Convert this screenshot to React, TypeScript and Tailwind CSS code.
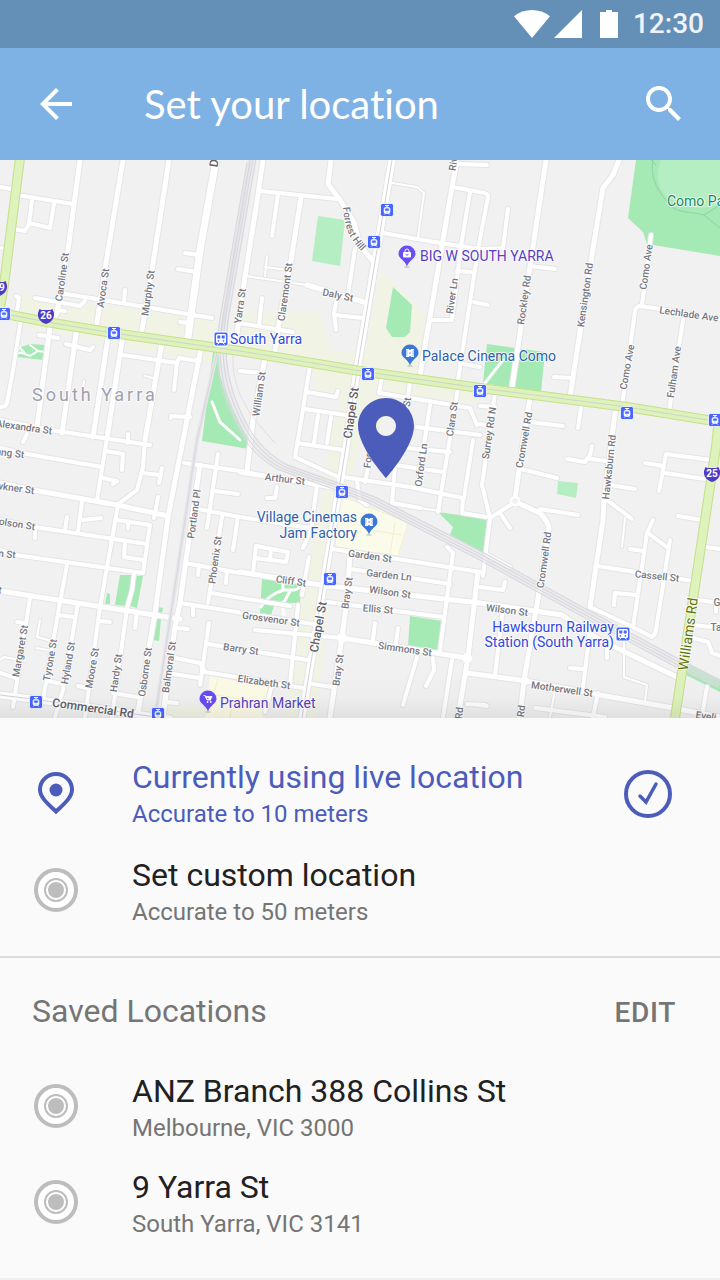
import { useState } from "react";

type Label = [x: number, y: number, angle: number, text: string];

const roads = [
  // north-west
  "M0 187 L11 189", "M17 195 L73 204", "M32 200 L29 224 L25 231 L13 229", "M29 223 L50 228 L54 204",
  "M0 248 L2 248", "M185 253 L199 255", "M178 269 L197 272", "M180 322 L188 323",
  "M35 298 L80 306 L85 301", "M60 293 L127 304 L212 318", "M125 290 L124 303", "M57 310 L65 311",
  "M16 296 L19 298 L17 311", "M21 319 L13 370 L7 403 Q6 407 0 407", "M39 335 L58 338",
  "M66 344 L90 350 L93 347", "M123 355 L177 363 L179 358 L200 361", "M177 363 L174 390",
  "M190 417 L171 416 L171 418", "M128 434 L128 443", "M0 420 L50 430 L150 445", "M27 434 L23 442",
  "M278 194 L272 236", "M337 299 L334 313 L336 330", "M335 315 L363 318",
  "M355 248 L348 295", "M262 298 L259 325", "M239 323 L293 332", "M260 191 L337 199",
  // north-east
  "M383 233 L440 243 L480 249 L503 248 L508 209", "M453 187 L480 192 Q489 193 488 197 L478 250 L458 380",
  "M470 192 L461 246 L452 320 L432 320", "M457 164 L487 165", "M457 271 L473 272", "M474 302 L488 305",
  "M530 266 L555 269", "M554 377 L572 378",
  "M720 319 L660 309 L640 306 Q636 306 635 311 L622 406", "M651 235 L642 305", "M683 320 L669 412",
  "M463 364 L480 367",
  // centre
  "M240 371 L262 373", "M310 366 L298 440 L295 457 L338 477", "M307 392 L336 397 L338 391", "M305 409 L352 416",
  "M318 415 L314 443", "M331 417 L327 443", "M382 377 L379 393", "M410 382 L402 440 L393 462",
  "M430 405 L418 485", "M380 393 L470 408 L477 425", "M458 388 L438 512", "M417 427 L480 435",
  "M397 447 L450 452", "M395 465 L443 472", "M343 477 L410 487 L463 498 L462 513 L486 517",
  "M395 467 L392 503 L420 508", "M357 482 L360 500 L367 505", "M374 440 L365 482", "M473 440 L464 498",
  "M297 443 L343 450", "M277 487 L275 498 L267 498", "M317 485 L311 530 L303 548", "M240 517 L310 528",
  "M309 557 L302 595", "M253 573 L256 546 L288 552 L286 562 L255 558", "M271 549 L270 560",
  "M495 393 L482 485 L490 518 L483 576", "M480 406 L495 407", "M480 424 L492 426", "M530 422 L563 426", "M581 407 L578 428",
  // south-west
  "M0 448 L27 454 L102 467", "M0 520 L35 527 L147 544", "M0 550 L15 555 L143 573",
  "M107 438 L97 500", "M145 440 L143 467 L137 490 L117 505", "M142 473 L160 475", "M162 468 L159 483",
  "M105 451 L123 454 L122 470", "M103 478 L117 481 L113 484", "M82 502 L78 532", "M82 520 L101 518",
  "M67 517 L65 530", "M35 530 L35 538", "M158 497 L154 518", "M118 505 L100 607 L85 717",
  "M117 520 L150 525 L143 573", "M128 521 L128 529", "M125 543 L124 557 L143 560",
  "M67 565 L60 602 L43 700", "M30 598 L13 707", "M78 603 L63 690 L55 717", "M127 608 L112 717",
  "M137 612 L135 628", "M100 621 L110 622", "M58 615 L73 617", "M47 681 L63 684", "M113 693 L137 697",
  "M0 673 L16 678", "M17 622 L24 623", "M78 686 L86 688", "M134 574 L132 590 L127 608",
  "M184 463 L248 472", "M218 454 L207 528", "M214 491 L238 494", "M198 509 L240 517", "M222 517 L208 603",
  "M238 517 L233 550", "M185 563 L240 573", "M199 565 L198 575", "M227 571 L226 583", "M211 593 L290 606",
  "M180 603 L313 624", "M193 607 L193 615", "M209 623 L200 685", "M208 644 L308 660", "M177 628 L188 629",
  "M175 658 L200 663 L205 672 L303 688", "M173 674 L200 678", "M164 702 L177 703", "M298 605 L290 685", "M272 685 L265 712",
  // south
  "M333 549 L480 572", "M350 569 L450 584", "M327 602 L443 617", "M447 547 L453 553 L440 650",
  "M375 623 L373 640", "M398 628 L396 643", "M417 657 L403 705", "M433 658 L434 670 L426 686", "M452 660 L443 717",
  "M312 684 L333 687", "M255 630 L342 638",
  // south-east
  "M515 502 L490 518", "M540 509 L578 515", "M521 469 L557 478", "M500 513 L510 528", "M487 555 L510 567",
  "M567 459 L585 462 L590 455 L592 446", "M590 459 L607 461", "M610 485 L635 489", "M607 500 L632 519",
  "M653 520 L647 533 L633 627", "M648 533 L668 548", "M630 549 L643 551", "M597 566 L693 581",
  "M614 605 L615 593 L637 595", "M590 607 L633 627 L652 637 Q655 635 656 630 L670 540",
  "M645 463 L663 466", "M659 491 L666 454 L711 460", "M665 473 L705 479", "M678 516 L702 520",
  "M706 547 L720 549", "M697 600 L720 603", "M693 625 L720 628", "M716 603 L716 612", "M693 638 L708 642 L712 653 L720 656",
  "M707 687 L703 710", "M535 708 L605 717", "M598 693 L593 717", "M590 630 L583 687", "M570 668 L583 669",
  "M607 645 L607 658", "M480 587 L503 590 L505 582", "M503 608 L495 675", "M480 705 L487 706", "M467 704 L485 705",
];

const mainRoads = [
  "M80 160 L68 250 L57 313 L50 327 L37 427", "M123 160 L106 263 L97 323", "M169 160 L152 270 L142 330",
  "M77 327 L62 433", "M108 337 L93 437", "M123 335 L107 438", "M162 342 L145 440",
  "M201 348 L168 517 L155 613 L138 712", "M263 160 L258 195 L245 277 L236 340",
  "M331 160 L328 184 L340 200 L354 222 L360 246 L374 262", "M301 197 L290 267 L279 323 L275 352",
  "M307 285 L327 291 L367 303", "M265 358 L253 420 L247 471", "M457 160 L452 187 L430 317 L420 375",
  "M546 160 L512 387", "M619 160 L613 175 L603 188 L590 267 L570 397",
  "M0 483 L33 490 L117 505 L168 516", "M0 591 L180 619", "M200 465 L186 560 L180 603 L175 627 L163 717",
  "M240 472 L315 484 L337 488", "M240 572 L320 585 L480 603 L562 615 L600 640 L677 677",
  "M350 553 L347 600 L342 637 L330 717", "M342 638 L467 658", "M478 572 L468 657 L458 717",
  "M467 673 L520 680 L600 695 L673 708 L720 717", "M615 413 L604 500 L603 520 L590 607",
  "M530 398 L519 470 L515 500", "M516 502 L540 513 Q548 522 549 528 L537 605 L524 680 L520 717",
];

const lanes = [
  "M392 183 L417 187 L424 193 L418 237", "M267 256 L265 276", "M265 267 L288 270", "M246 276 L307 285",
  "M625 518 L622 547", "M40 620 L37 637 L52 641", "M36 648 L48 650", "M84 381 L83 387", "M145 376 L153 378",
  "M420 508 L440 511", "M555 690 L550 717", "M184 463 L197 465", "M0 660 L4 657 L15 659",
  "M624 642 L624 677 L647 685 L645 700",
];

const wideRoads = ["M216 160 L200 250 L188 337"];
const tramRoads = ["M392 160 L357 370 L347 440 L302 718", "M0 695 L40 700 L155 717 L170 719"];

const northRail = "M250 160 L222 330 L197 440 L170 620 L155 718";
const eastRail =
  "M252 160 L226 310 C219 350 221 378 236 412 C248 440 262 455 283 467 L337 486 L373 500 L480 555 L580 610 L680 664 L720 684";

const parks = [
  "213,352 219,352 220,375 228,398 240,424 249,440 249,449 202,441",
  "21,347 30,344 45,345 43,360 17,357",
  "393,287 412,305 410,332 405,337 392,337 386,328",
  "487,344 545,352 541,392 483,383",
  "636,160 628,218 643,232 647,244 720,256 720,160",
  "120,575 133,575 128,606 115,605",
  "136,576 143,576 137,608 130,606",
  "158,607 163,608 162,613 157,612",
  "156,619 161,619 159,641 153,640",
  "107,593 110,594 110,604 105,604",
  "262,579 301,584 300,603 275,603 271,615 260,613",
  "410,616 442,621 439,652 408,647",
  "438,512 487,519 483,553 450,535 453,527",
  "688,663 720,680 720,692 686,675",
];

const commercial = [
  "17,294 60,300 215,320 215,364 150,352 20,325",
  "240,312 320,312 330,350 365,352 380,270 427,316 417,372 480,386 480,402 400,395 372,440 330,440 340,400 315,390 312,366 240,352",
  "330,420 368,420 345,500 330,560 325,640 316,718 285,718 300,610 308,560 322,500",
  "165,704 200,707 205,718 160,718",
];

const streets: Label[] = [
  [62, 277, -82, "Caroline St"], [103, 288, -82, "Avoca St"], [148, 293, -82, "Murphy St"], [240, 306, -82, "Yarra St"],
  [285, 292, -82, "Claremont St"], [338, 295, 12, "Daly St"], [452, 296, -82, "River Ln"], [453, 164, -82, "Riv"],
  [524, 300, -82, "Rockley Rd"], [585, 295, -82, "Kensington Rd"], [646, 267, -82, "Como Ave"], [689, 314, 8, "Lechlade Ave"],
  [627, 367, -80, "Como Ave"], [674, 372, -82, "Fulham Ave"], [24, 427, 8, "Alexandra St"], [259, 394, -82, "William St"],
  [407, 402, -82, "St"], [452, 419, -82, "Clara St"], [489, 433, -82, "Surrey Rd N"], [524, 440, -80, "Cromwell Rd"],
  [609, 467, -84, "Hawksburn Rd"], [10, 453, 7, "ang St"], [15, 488, 8, "wkner St"], [17, 524, 9, "olson St"],
  [7, 554, 6, "n St"], [0, 590, 6, "t"], [194, 514, -82, "Portland Pl"], [215, 560, -82, "Phoenix St"],
  [285, 479, 7, "Arthur St"], [368, 459, -84, "Forr"], [421, 465, -82, "Oxford Ln"], [20, 651, -80, "Margaret St"],
  [50, 660, -80, "Tyrone St"], [68, 663, -80, "Hyland St"], [92, 668, -80, "Moore St"], [116, 673, -82, "Hardy St"],
  [145, 672, -82, "Osborne St"], [169, 667, -82, "Balmoral St"], [291, 581, 8, "Cliff St"], [271, 619, 8, "Grosvenor St"],
  [241, 649, 8, "Barry St"], [264, 682, 8, "Elizabeth St"], [370, 556, 8, "Garden St"], [389, 575, 6, "Garden Ln"],
  [390, 592, 8, "Wilson St"], [378, 609, 5, "Ellis St"], [405, 649, 8, "Simmons St"], [347, 593, -82, "Bray St"],
  [338, 670, -82, "Bray St"], [544, 560, -82, "Cromwell Rd"], [507, 610, 7, "Wilson St"], [657, 576, 6, "Cassell St"],
  [562, 689, 8, "Motherwell St"], [521, 711, -82, "Rd"], [459, 713, -82, "Rd"], [717, 602, 0, "G"], [716, 627, 0, "Ta"],
  [706, 716, 8, "Eveli"],
];

const arterials: Label[] = [
  [351, 413, -82, "Chapel St"], [318, 627, -80, "Chapel St"], [93, 708, 8, "Commercial Rd"], [214, 163, -82, "D"],
];

const tramStops = [
  [387, 210], [374, 242], [368, 374], [342, 492], [330, 579], [114, 333], [4, 314],
  [480, 391], [627, 413], [715, 420], [36, 702], [158, 714],
];

function Roads({ paths, width, casing }: { paths: string[]; width: number; casing: boolean }) {
  return (
    <g fill="none" strokeLinecap="round" strokeLinejoin="round" stroke={casing ? "#e5e5e8" : "#ffffff"} strokeWidth={casing ? width + 2 : width}>
      {paths.map((d) => <path key={d} d={d} />)}
    </g>
  );
}

function Labels({ items, color, size }: { items: Label[]; color: string; size: number }) {
  return (
    <g fill={color} fontSize={size} fontWeight={500} textAnchor="middle" stroke="#ffffff" strokeOpacity="0.8" strokeWidth="2" strokeLinejoin="round" paintOrder="stroke">
      {items.map(([x, y, angle, text]) => (
        <text key={`${text}-${x}-${y}`} transform={`translate(${x} ${y}) rotate(${angle})`} dy="0.35em">{text}</text>
      ))}
    </g>
  );
}

function PoiPin({ x, y, color, kind }: { x: number; y: number; color: string; kind: "bag" | "film" | "cart" }) {
  return (
    <g transform={`translate(${x} ${y})`}>
      <ellipse cx="0" cy="13" rx="3" ry="1" fill="#000" opacity="0.15" />
      <path d="M0 -8.500a8.500 8.500 0 0 0 -8.500 8.500c0 4.500 6.500 6 8.500 12.500c2 -6.500 8.500 -8 8.500 -12.500a8.500 8.500 0 0 0 -8.500 -8.500z" fill={color} />
      {kind === "bag" && (
        <>
          <rect x="-4" y="-2" width="8" height="5.500" rx="1" fill="#fff" />
          <path d="M-2 -2v-1a2 2 0 0 1 4 0v1" fill="none" stroke="#fff" />
          <path d="M-1.500 0.300q1.500 1.800 3 0" fill="none" stroke={color} />
        </>
      )}
      {kind === "film" && (
        <>
          <path d="M-4 -4h3v8h-3zM1 -4h3v8h-3zM-1 -3.200h2v6.400h-2z" fill="#fff" />
          <path d="M-4 -2h1.500M-4 0h1.500M-4 2h1.500M2.500 -2h1.500M2.500 0h1.500M2.500 2h1.500M-1 0h2" stroke={color} strokeWidth="0.700" />
        </>
      )}
      {kind === "cart" && (
        <>
          <path d="M-4.500 -3.500h1.700l2 4.500h3.800M-2.500 -2.500h6.500l-1.300 2.800h-4z" fill="#fff" stroke="#fff" strokeWidth="0.900" />
          <circle cx="-0.500" cy="3" r="0.900" fill="#fff" />
          <circle cx="2.700" cy="3" r="0.900" fill="#fff" />
        </>
      )}
    </g>
  );
}

function TramStop({ x, y }: { x: number; y: number }) {
  return (
    <g transform={`translate(${x} ${y})`}>
      <rect x="-6.500" y="-6.500" width="13" height="13" rx="2" fill="#4766ff" stroke="#fff" strokeWidth="0.800" />
      <path d="M-2 -4.500h4M0 -4.500v2" stroke="#fff" strokeWidth="1.200" />
      <path d="M-2.200 -2.500h4.400l0.800 1.200v3.800l-1.200 1h-3.600l-1.200 -1v-3.800zM-3 4.800l1 -1.300M3 4.800l-1 -1.300" fill="#fff" stroke="#fff" strokeWidth="0.600" />
      <path d="M-1.700 -1.200h3.400v1.700h-3.400zM-0.700 2h1.400" fill="#4766ff" stroke="#4766ff" strokeWidth="0.500" />
    </g>
  );
}

function TrainStation({ x, y }: { x: number; y: number }) {
  return (
    <g transform={`translate(${x} ${y})`}>
      <rect x="-7" y="-7" width="14" height="14" rx="2" fill="#4766ff" stroke="#fff" />
      <rect x="-5" y="-5" width="10" height="9" rx="1.500" fill="#fff" />
      <path d="M-3.700 -3.500h3v3h-3zM0.700 -3.500h3v3h-3z" fill="#4766ff" />
      <circle cx="-2.500" cy="1.800" r="0.900" fill="#4766ff" />
      <circle cx="2.500" cy="1.800" r="0.900" fill="#4766ff" />
      <path d="M-3.500 5.500l1.300 -1.500M3.500 5.500l-1.300 -1.500" stroke="#fff" />
    </g>
  );
}

function RouteShield({ x, y, route }: { x: number; y: number; route: string }) {
  return (
    <g transform={`translate(${x} ${y})`}>
      <path d="M-6.500 -7l2 1h9l2 -1l1.500 4c0.500 5 -2 9 -8 11c-6 -2 -8.500 -6 -8 -11z" fill="#4f3ac6" />
      <text fill="#fff" fontSize="10" fontWeight="700" textAnchor="middle" dy="3">{route}</text>
    </g>
  );
}

function LocationMap() {
  return (
    <svg viewBox="0 160 720 558" className="block h-auto w-full bg-[#f1f1f1] font-[Roboto,sans-serif]" role="img" aria-label="Map of South Yarra">
      <defs>
        <linearGradient id="map-fade" x1="0" y1="0" x2="0" y2="1">
          <stop offset="0" stopColor="#000" stopOpacity="0" />
          <stop offset="0.600" stopColor="#000" stopOpacity="0.015" />
          <stop offset="1" stopColor="#000" stopOpacity="0.070" />
        </linearGradient>
        <path id="forrest-hill" d="M343 207C345 226 346 236 366 256" />
      </defs>

      <g fill="#f1f4e5">{commercial.map((p) => <polygon key={p} points={p} />)}</g>
      <path d="M340 495L408 523L398 556L335 547z" fill="#fbfbeb" stroke="#f1f1cb" />
      <path d="M370 530L402 535M395 523L390 554M357 496L372 512" fill="none" stroke="#f1f1cb" />
      <path d="M210 676L270 688L262 718L205 718z" fill="#fbfbe6" />
      <path d="M210 694L262 702M218 678L214 694M232 705L230 718" fill="none" stroke="#f1f1cb" />

      <g fill="#a5e9b5">{parks.map((p) => <polygon key={p} points={p} />)}</g>
      <g fill="#b6eec4">
        <polygon points="318,216 345,220 340,266 312,261" />
        <polygon points="558,481 578,483 576,498 557,494" />
        <path d="M661 160C656 170 656 184 664 194C678 207 702 212 720 204V160z" />
      </g>
      <path d="M651 160L656 165M653 160C650 180 658 192 673 208C683 213 692 212 704 215L720 228M704 215L720 205" fill="none" stroke="#93cfad" />
      <g fill="none" stroke="#fff" strokeWidth="3" strokeLinecap="round">
        <path d="M212 402L220 422L240 440M503 360L485 383" />
        <path d="M18 353L24 352L18 346M22 353L30 356L38 351L45 352M38 351L30 345" strokeWidth="2" />
        <path d="M261 607C266 598 276 592 284 590H294Q300 589 300 584M283 583V590M290 591L282 606M283 602L284 615" />
      </g>

      <Roads paths={lanes} width={2} casing />
      <Roads paths={roads} width={4} casing />
      <Roads paths={mainRoads} width={5} casing />
      <Roads paths={wideRoads} width={7} casing />
      <Roads paths={tramRoads} width={7} casing />
      <Roads paths={lanes} width={2} casing={false} />
      <Roads paths={roads} width={4} casing={false} />
      <Roads paths={mainRoads} width={5} casing={false} />
      <Roads paths={wideRoads} width={7} casing={false} />
      <Roads paths={tramRoads} width={7} casing={false} />
      <g fill="none" stroke="#d2d2dc">{tramRoads.map((d) => <path key={d} d={d} />)}</g>
      <circle cx="342" cy="638" r="5" fill="#fff" />
      <circle cx="467" cy="658" r="5" fill="#fff" />
      <circle cx="525" cy="681" r="4" fill="#fff" />
      <circle cx="515" cy="501" r="4" fill="#f1f1f1" stroke="#fff" strokeWidth="2.500" />

      <g fill="none" stroke="#d6d6dc">
        <path d={northRail} stroke="#e6e6ea" strokeWidth="4" />
        <path d={northRail} />
        <path d={eastRail} stroke="#e6e6ea" strokeWidth="9" opacity="0.500" />
        {[-5, -2, 1, 4].map((dx) => <path key={dx} d={eastRail} transform={`translate(${dx} ${-dx / 2})`} />)}
        <path d="M233 352C232 372 236 390 247 408C258 425 262 428 275 443" stroke="#e0e0e5" />
      </g>

      <g fill="none">
        <g stroke="#c8de8b" strokeWidth="10">
          <path d="M20 158L4 285L-1 312" />
          <path d="M0 313L47 322L113 333L240 351L360 371L480 388L627 407L720 422M719 418L716 447L675 718" />
        </g>
        <g stroke="#def2bb" strokeWidth="8">
          <path d="M20 158L4 285L-1 312" />
          <path d="M719 418L716 447L675 718" />
          <path d="M0 313L47 322L113 333L240 351L360 371L480 388L627 407L720 422" />
        </g>
        <path d="M0 313L47 322L113 333L240 351L360 371L480 388L627 407L720 422" stroke="#cfd4c8" strokeWidth="1" />
      </g>

      <Labels items={streets} color="#77777f" size={10} />
      <Labels items={arterials} color="#5f5f69" size={12} />
      <g stroke="#fff" strokeOpacity="0.8" strokeWidth="2" strokeLinejoin="round" paintOrder="stroke">
        <text fontSize="10" fontWeight="500" fill="#77777f">
          <textPath href="#forrest-hill">Forrest Hill</textPath>
        </text>
        <text transform="translate(688 634) rotate(-82)" textAnchor="middle" dy="0.35em" fontSize="14" fill="#65700d">Williams Rd</text>
        <text x="32" y="401" fontSize="18" className="tracking-[3px]" fill="#a0a0b0">South Yarra</text>
        <g fontSize="14">
          <text x="667" y="206" fill="#188a5b">Como Park</text>
          <text x="420" y="261" fill="#573ec3">BIG W SOUTH YARRA</text>
          <text x="422" y="361" fill="#2f5fae">Palace Cinema Como</text>
          <text x="357" y="522" textAnchor="end" fill="#2f5fae">Village Cinemas</text>
          <text x="357" y="538" textAnchor="end" fill="#2f5fae">Jam Factory</text>
          <text x="220" y="708" fill="#573ec3">Prahran Market</text>
          <text x="230" y="344" fill="#3348dc">South Yarra</text>
          <text x="614" y="632" textAnchor="end" fill="#3348dc">Hawksburn Railway</text>
          <text x="614" y="647" textAnchor="end" fill="#3348dc">Station (South Yarra)</text>
        </g>
      </g>

      {tramStops.map(([x, y]) => <TramStop key={`${x}-${y}`} x={x} y={y} />)}
      <TrainStation x={221} y={339} />
      <TrainStation x={623} y={634} />
      <RouteShield x={46} y={316} route="26" />
      <RouteShield x={-1} y={288} route="29" />
      <RouteShield x={712} y={474} route="25" />
      <PoiPin x={407} y={254} color="#6a4cf5" kind="bag" />
      <PoiPin x={410} y={353} color="#3c78d8" kind="film" />
      <PoiPin x={369} y={522} color="#3c78d8" kind="film" />
      <PoiPin x={208} y={699} color="#6a4cf5" kind="cart" />

      <rect x="0" y="668" width="720" height="50" fill="url(#map-fade)" />
      <path
        transform="translate(338 390) scale(4)"
        d="M12 2C8.130 2 5 5.130 5 9c0 5.250 7 11 7 11s7-5.750 7-11c0-3.870-3.130-7-7-7zm0 9.500c-1.380 0-2.500-1.120-2.500-2.500s1.120-2.500 2.500-2.500 2.500 1.120 2.500 2.500-1.120 2.500-2.500 2.500z"
        fill="none"
      />
      <path
        transform="translate(338 390) scale(4)"
        d="M12 2C8.130 2 5 5.130 5 9c0 5.250 7 13 7 13s7-7.750 7-13c0-3.870-3.130-7-7-7zm0 9.500c-1.380 0-2.500-1.120-2.500-2.500s1.120-2.500 2.500-2.500 2.500 1.120 2.500 2.500-1.120 2.500-2.500 2.500z"
        fill="#4c5cba"
      />
    </svg>
  );
}

function LivePinIcon() {
  return (
    <svg width="36" height="44" viewBox="0 0 36 44" aria-hidden="true">
      <path d="M18 3C9 3 2 10 2 18.500C2 26.500 10 33 18 40.500C26 33 34 26.500 34 18.500C34 10 27 3 18 3z" fill="none" stroke="#4c5cba" strokeWidth="4" />
      <circle cx="18" cy="19" r="6.500" fill="#4c5cba" />
    </svg>
  );
}

function RingIcon() {
  return (
    <svg width="44" height="44" viewBox="0 0 44 44" aria-hidden="true">
      <circle cx="22" cy="22" r="20" fill="#fff" stroke="#bdbdbd" strokeWidth="4" />
      <circle cx="22" cy="22" r="11" fill="none" stroke="#bdbdbd" strokeWidth="2" />
      <circle cx="22" cy="22" r="8" fill="#bdbdbd" />
    </svg>
  );
}

function CheckIcon() {
  return (
    <svg width="48" height="48" viewBox="0 0 48 48" fill="none" stroke="#4c5cba" strokeWidth="4" aria-hidden="true">
      <circle cx="24" cy="24" r="22" />
      <path d="M16 26L22 32L32 14" strokeWidth="3.500" strokeLinecap="round" />
    </svg>
  );
}

type OptionProps = { id: string; title: string; detail: string; live?: boolean; selected: string; onSelect: (id: string) => void };

function LocationOption({ id, title, detail, live = false, selected, onSelect }: OptionProps) {
  const active = selected === id;
  return (
    <label className="relative flex cursor-pointer items-center pr-12 pl-8">
      <input type="radio" name="location" value={id} checked={active} onChange={() => onSelect(id)} className="sr-only" />
      <span className={`flex w-12 shrink-0 justify-center ${live ? "pb-0.5" : "pb-1"}`}>{live ? <LivePinIcon /> : <RingIcon />}</span>
      <span className="ml-[52px] flex min-w-0 flex-1 flex-col">
        <span className={`text-[32px] leading-[40px] ${active ? "text-[#4c5cba]" : "text-[#212121]"}`}>{title}</span>
        <span className={`text-[24px] leading-[34px] ${active ? "text-[#4c5cba]" : "text-[#757575]"}`}>{detail}</span>
      </span>
      {active && <CheckIcon />}
    </label>
  );
}

export default function App() {
  const [selected, setSelected] = useState("live");
  const common = { selected, onSelect: setSelected };
  return (
    <div className="flex min-h-screen flex-col bg-[#fafafa] font-[Roboto,sans-serif]">
      <div className="flex h-12 items-center justify-end bg-[#648fb6] pr-4 text-white">
        <svg width="104" height="28" viewBox="0 0 104 28" fill="currentColor" aria-hidden="true">
          <path d="M0 6.300C10.500 -2 25.500 -2 36 6.300L18 28z" />
          <path d="M40 28L68 0V28z" />
          <path d="M86 2h6V0h6v2h6v26H86z" />
        </svg>
        <span className="ml-[15px] text-[28px] leading-8 font-medium text-white/90">12:30</span>
      </div>

      <header className="flex h-28 items-center bg-[#7eb1e4] px-8 text-white">
        <button type="button" aria-label="Back" className="size-12 shrink-0">
          <svg width="48" height="48" viewBox="0 0 24 24" fill="currentColor" aria-hidden="true">
            <path d="M20 11H7.830l5.590-5.590L12 4l-8 8 8 8 1.410-1.410L7.830 13H20v-2z" />
          </svg>
        </button>
        <h1 className="ml-16 flex-1 font-[Lato,sans-serif] text-[40px] leading-[48px] [font-variant-ligatures:none]">Set your location</h1>
        <button type="button" aria-label="Search" className="size-12 shrink-0">
          <svg width="48" height="48" viewBox="0 0 24 24" fill="currentColor" aria-hidden="true">
            <path d="M15.500 14h-.79l-.28-.27C15.410 12.590 16 11.110 16 9.500 16 5.910 13.090 3 9.500 3S3 5.910 3 9.500 5.910 16 9.500 16c1.610 0 3.090-.59 4.230-1.570l.27.28v.79l5 4.990L20.490 19l-4.990-5zm-6 0C7.010 14 5 11.990 5 9.500S7.010 5 9.500 5 14 7.010 14 9.500 11.990 14 9.500 14z" />
          </svg>
        </button>
      </header>

      <LocationMap />

      <main className="flex-1 border-b-2 border-[#f0f0f0]">
        <section aria-label="Current location" className="flex flex-col gap-6 border-b-2 border-[#dcdcdc] pt-[39px] pb-[27px]">
          <LocationOption id="live" title="Currently using live location" detail="Accurate to 10 meters" live {...common} />
          <LocationOption id="custom" title="Set custom location" detail="Accurate to 50 meters" {...common} />
        </section>
        <section aria-label="Saved locations" className="flex flex-col gap-[22px] pb-[37px]">
          <div className="flex items-baseline justify-between pt-[33px] pr-11 pb-[18px] pl-8 text-[#757575]">
            <h2 className="text-[32px] leading-[40px]">Saved Locations</h2>
            <button type="button" className="text-[28px] leading-[36px] font-medium tracking-wide">EDIT</button>
          </div>
          <LocationOption id="anz" title="ANZ Branch 388 Collins St" detail="Melbourne, VIC 3000" {...common} />
          <LocationOption id="yarra" title="9 Yarra St" detail="South Yarra, VIC 3141" {...common} />
        </section>
      </main>
    </div>
  );
}
